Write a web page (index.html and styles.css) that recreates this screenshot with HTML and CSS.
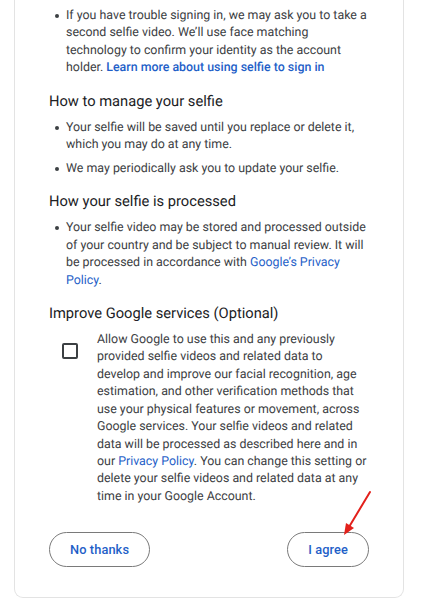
FILE: index.html
```html
<!DOCTYPE html>
<html lang="en">
<head>
<meta charset="utf-8">
<title>Selfie video consent</title>
<link rel="stylesheet" href="styles.css">
</head>
<body>
<main class="card">
  <ul class="bullets">
    <li>If you have trouble signing in, we may ask you to take a second selfie video. We’ll use face matching technology to confirm your identity as the account holder. <a class="link link-strong" href="#">Learn more about using selfie to sign in</a></li>
  </ul>

  <h2 class="section-title">How to manage your selfie</h2>
  <ul class="bullets">
    <li>Your selfie will be saved until you replace or delete it, which you may do at any time.</li>
    <li>We may periodically ask you to update your selfie.</li>
  </ul>

  <h2 class="section-title">How your selfie is processed</h2>
  <ul class="bullets">
    <li>Your selfie video may be stored and processed outside of your country and be subject to manual review. It will be processed in accordance with <a class="link" href="#">Google’s Privacy Policy</a>.</li>
  </ul>

  <h2 class="section-title">Improve Google services (Optional)</h2>
  <label class="consent">
    <span class="consent-box"><input type="checkbox" class="checkbox"></span>
    <span class="consent-text">Allow Google to use this and any previously provided selfie videos and related data to develop and improve our facial recognition, age estimation, and other verification methods that use your physical features or movement, across Google services. Your selfie videos and related data will be processed as described here and in our <a class="link" href="#">Privacy Policy</a>. You can change this setting or delete your selfie videos and related data at any time in your Google Account.</span>
  </label>

  <div class="actions">
    <button class="pill-btn" type="button">No thanks</button>
    <button class="pill-btn pill-agree" type="button">I agree
      <svg class="pointer-arrow" width="34" height="48" viewBox="0 0 34 48" aria-hidden="true">
        <line x1="29" y1="2" x2="8" y2="37" stroke="#e3201b" stroke-width="2" stroke-linecap="round"/>
        <polygon points="3,45 5,33 13,38" fill="#e3201b"/>
      </svg>
    </button>
  </div>
</main>
</body>
</html>
```

FILE: styles.css
```css
html, body {
  margin: 0;
  padding: 0;
  background: #ffffff;
}

body {
  font-family: Roboto, "Noto Sans", Arial, sans-serif;
  color: #3c4043;
  font-size: 12.4px;
  line-height: 17.4px;
  text-rendering: geometricPrecision;
}

.card {
  width: 327px;
  margin: 0 0 3px 14px;
  padding: 7px 27px 30px 34px;
  border: 1px solid #e3e3e3;
  border-top: 0;
  border-radius: 0 0 9px 9px;
}

.bullets {
  list-style: none;
  margin: 0;
  padding: 0 6px 0 17px;
}

.bullets li {
  position: relative;
}

.bullets li + li {
  margin-top: 6.6px;
}

.bullets li::before {
  content: "";
  position: absolute;
  left: -11px;
  top: 7px;
  width: 4px;
  height: 4px;
  border-radius: 50%;
  background: #3c4043;
}

.link {
  color: #1f5fc8;
  text-decoration: none;
}

.link-strong {
  font-weight: 500;
}

.section-title {
  margin: 13px 0 7px 0;
  font-size: 14.7px;
  line-height: 22px;
  font-weight: 400;
  color: #202124;
}

.consent {
  display: flex;
  align-items: flex-start;
  cursor: pointer;
}

.consent-box {
  width: 48px;
  flex: none;
  display: flex;
  padding: 12px 0 0 13px;
  box-sizing: border-box;
}

.checkbox {
  appearance: none;
  -webkit-appearance: none;
  width: 16px;
  height: 16px;
  margin: 0;
  border: 2px solid #3c4043;
  border-radius: 2px;
  background: #fff;
}

.consent-text {
  flex: 1;
  padding-right: 8px;
}

.actions {
  display: flex;
  justify-content: space-between;
  margin-top: 27px;
  padding-right: 7px;
}

.pill-btn {
  position: relative;
  height: 35px;
  padding: 0 20px;
  border: 1px solid #7a7a7a;
  border-radius: 18px;
  background: #fff;
  color: #1f5fc8;
  font-family: Roboto, "Noto Sans", Arial, sans-serif;
  font-size: 12.8px;
  font-weight: 500;
  letter-spacing: 0.1px;
}

.pointer-arrow {
  position: absolute;
  left: 53px;
  top: -43px;
  overflow: visible;
}
```
